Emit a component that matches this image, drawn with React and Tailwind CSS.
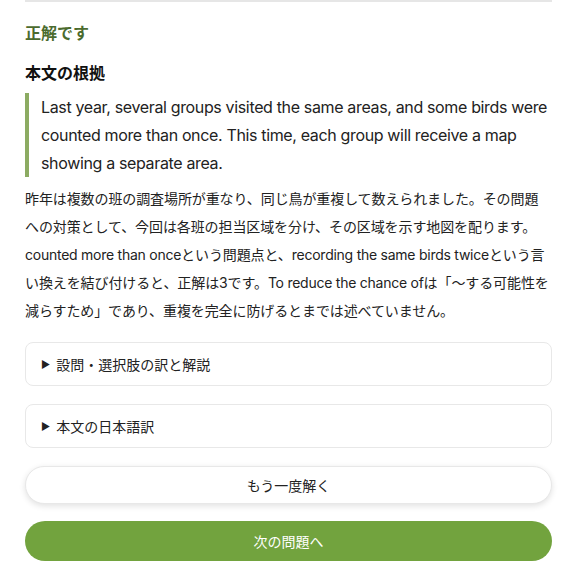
import React from "react";

const font = { fontFamily: 'Inter, "Noto Sans CJK JP", sans-serif' };

export default function App() {
  return (
    <div className="min-h-[561px] bg-white px-[25px] text-[#1a1a1a]" style={font}>
      <div className="h-[2px] bg-[#e6e6e6]" />

      <h3 className="mt-[19px] text-[16px] leading-[24px] font-bold text-[#4b6b2e]">正解です</h3>

      <h4 className="mt-4 text-[16px] leading-[24px] font-bold text-[#111]">本文の根拠</h4>

      <blockquote className="mt-2 border-l-4 border-[#8cab62] pl-3 text-[16px] leading-[28px] tracking-[-0.35px] text-[#222]">
        Last year, several groups visited the same areas, and some birds were counted more than once. This time, each group will receive a map showing a separate area.
      </blockquote>

      <p className="mt-2 text-[14px] leading-[28px] tracking-[-0.1px] text-[#222]">
        昨年は複数の班の調査場所が重なり、同じ鳥が重複して数えられました。その問題への対策として、今回は各班の担当区域を分け、その区域を示す地図を配ります。
        <span className="tracking-[-0.25px]">counted more than once</span>という問題点と、
        <span className="tracking-[-0.25px]">recording the same birds twice</span>という言い換えを結び付けると、正解は3です。
        <span className="tracking-[-0.25px]">To reduce the chance of</span>は「〜する可能性を減らすため」であり、重複を完全に防げるとまでは述べていません。
      </p>

      <div className="mt-[17px] flex h-[44px] items-center rounded-lg border border-[#e8e8e8] px-[15px] text-[14px] text-[#222]">
        <span className="mr-[6px] text-[10px]">▶</span>設問・選択肢の訳と解説
      </div>

      <div className="mt-[18px] flex h-[44px] items-center rounded-lg border border-[#e8e8e8] px-[15px] text-[14px] text-[#222]">
        <span className="mr-[6px] text-[10px]">▶</span>本文の日本語訳
      </div>

      <button className="mt-[18px] flex h-[38px] w-full items-center justify-center rounded-full border border-[#e8e8e8] bg-white text-[14px] text-[#222] shadow-[0_2px_6px_rgba(0,0,0,0.12)]">
        もう一度解く
      </button>

      <button className="mt-[17px] flex h-[40px] w-full items-center justify-center rounded-full bg-[#72a33e] text-[14px] text-white">
        次の問題へ
      </button>
    </div>
  );
}
